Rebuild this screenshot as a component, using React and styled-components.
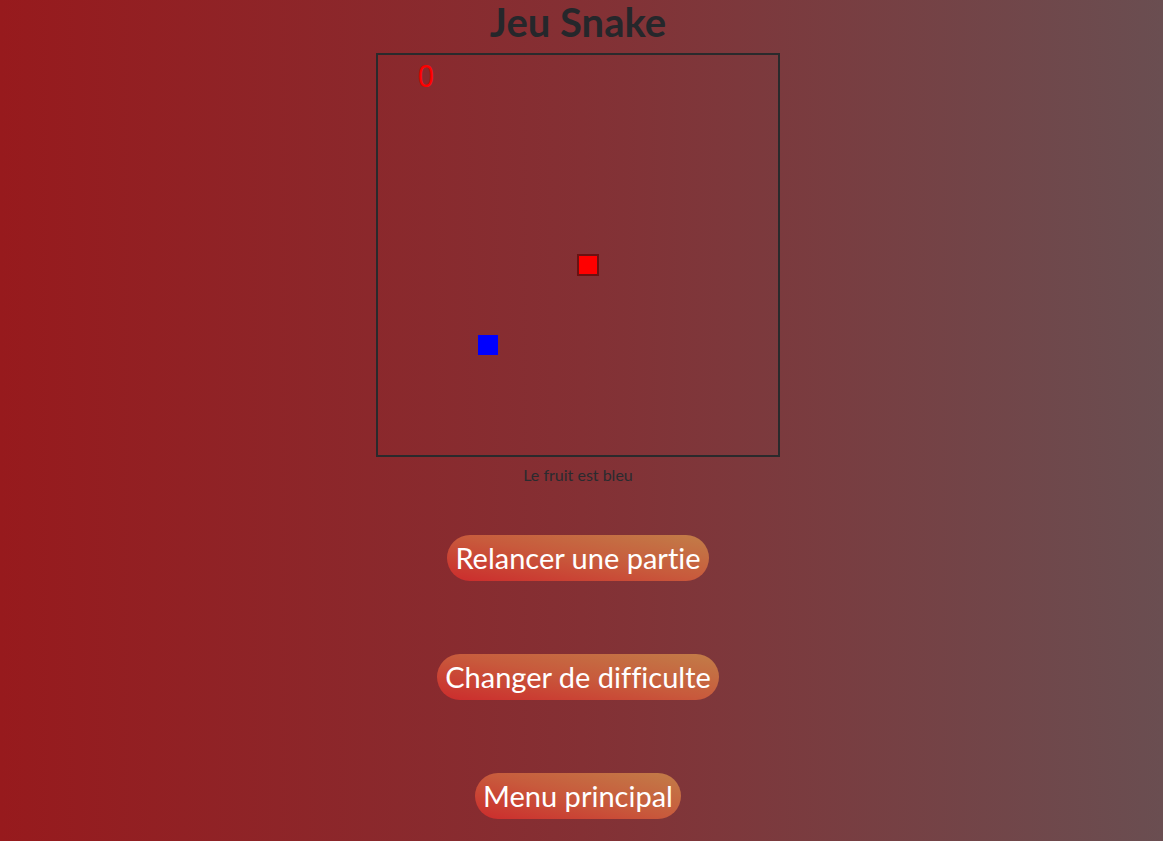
import React from "react";
import styled, { createGlobalStyle } from "styled-components";

const Global = createGlobalStyle`
  html, body { margin: 0; padding: 0; height: 100%; }
  body {
    background: linear-gradient(to right, #971a1d 0%, #843034 50%, #6a4e51 100%);
    font-family: Lato, "Open Sans", sans-serif;
    overflow: hidden;
  }
  #root { min-height: 100%; }
`;

const Page = styled.main`
  display: flex;
  flex-direction: column;
  align-items: center;
  padding-right: 7px;
  min-height: 841px;
`;

const Title = styled.h1`
  margin: 0;
  font-family: Lato, sans-serif;
  font-weight: 700;
  font-size: 40px;
  line-height: 44px;
  color: #25272b;
`;

const Board = styled.div`
  position: relative;
  margin-top: 9px;
  width: 400px;
  height: 400px;
  border: 2px solid #2a2a2c;
`;

const Score = styled.div`
  position: absolute;
  left: 40px;
  top: 6px;
  font-family: "Liberation Sans", Arial, sans-serif;
  font-size: 31px;
  line-height: 31px;
  color: #ff0000;
  transform: scaleX(0.92);
  transform-origin: left top;
`;

const Cell = styled.div`
  position: absolute;
  width: 20px;
  height: 20px;
  box-sizing: border-box;
  background: ${(p) => p.$fill};
  border: ${(p) => (p.$stroke ? `2px solid ${p.$stroke}` : "none")};
`;

const Caption = styled.p`
  margin: 8px 0 0;
  font-size: 16px;
  line-height: 20px;
  color: #2a2b2f;
`;

const Buttons = styled.div`
  display: flex;
  flex-direction: column;
  align-items: center;
  gap: 73px;
  margin-top: 50px;
`;

const Button = styled.button`
  height: 46px;
  padding: 0 8px;
  border: none;
  border-radius: 23px;
  background: linear-gradient(to top right, #cc2b2c 0%, #c85a3c 50%, #c27d48 100%);
  color: #ffffff;
  font-family: Lato, sans-serif;
  font-size: 29px;
  line-height: 46px;
  font-variant-ligatures: none;
  cursor: pointer;
`;

export default function App() {
  return (
    <>
      <Global />
      <Page>
        <Title>Jeu Snake</Title>
        <Board>
          <Score>0</Score>
          <Cell $fill="#ff0000" $stroke="#6b1212" style={{ left: 199, top: 199, width: 22, height: 22 }} />
          <Cell $fill="#0000ff" style={{ left: 100, top: 280 }} />
        </Board>
        <Caption>Le fruit est bleu</Caption>
        <Buttons>
          <Button>Relancer une partie</Button>
          <Button>Changer de difficulte</Button>
          <Button>Menu principal</Button>
        </Buttons>
      </Page>
    </>
  );
}
